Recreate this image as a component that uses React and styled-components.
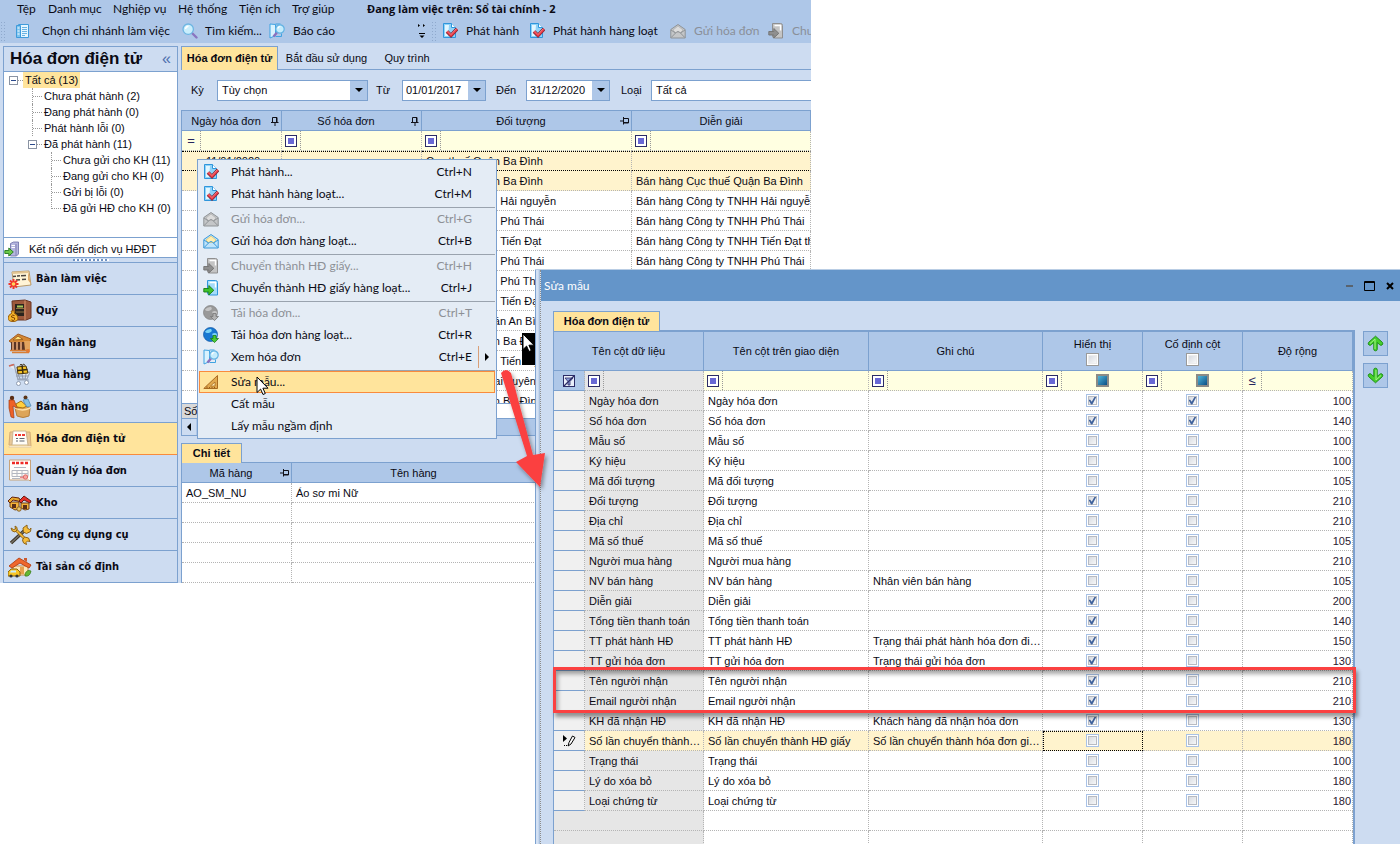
import React from 'react';
import styled, { createGlobalStyle, css } from 'styled-components';

const C = {
  bar: '#aec7e8',
  panel: '#cddcf1',
  line: '#7ca1cf',
  active: '#ffe49c',
  selected: '#fff3cd',
  filter: '#ffffe1',
  dots: '#b4b4b4',
  orange: '#f98b3c',
  red: '#fb4141',
};
const SANS = '"Liberation Sans", Arial, sans-serif';
const UI = 'Lato, "Open Sans", sans-serif';
const TAHOMA = '"DejaVu Sans Condensed", "DejaVu Sans", sans-serif';

const Global = createGlobalStyle`
  * { box-sizing: border-box; }
  body { margin: 0; background: #fff; color: #0a0a14; font: 11px/16px ${SANS}; }
  button, input, select { font: inherit; color: inherit; }
  button { padding: 0; border: 0; background: none; }
  ul { margin: 0; padding: 0; list-style: none; }
  svg { display: block; flex: none; }
`;

const Desktop = styled.div`
  position: relative;
  min-height: 100vh;
  overflow: hidden;
`;

/* ---------- main window ---------- */
const MainWindow = styled.main`
  width: calc(100% - 589px);
  min-width: 600px;
  background: ${C.panel};
  overflow: hidden;
`;
const TopBars = styled.header`
  height: 43px;
  background: ${C.bar};
  font: 12px/18px ${UI};
  white-space: nowrap;
  overflow: hidden;
`;
const MenuBar = styled.nav`
  display: flex;
  height: 19px;
  gap: 12px;
  padding-left: 17px;
`;
const MenuEntry = styled.button`
  height: 18px;
  width: ${(p) => p.$w}px;
  text-align: left;
  white-space: nowrap;
`;
const WorkingOn = styled.strong`
  margin-left: 19px;
  font: bold 11px/18px "Open Sans", sans-serif;
`;
const ToolRow = styled.div`
  display: flex;
  height: 24px;
  align-items: center;
`;
const ToolGroup = styled.div`
  display: flex;
  flex: none;
  align-items: center;
  width: ${(p) => p.$w || 'auto'};
`;
const Grip = styled.span`
  flex: none;
  width: 5px;
  height: 20px;
  margin-right: ${(p) => p.$after}px;
  background: radial-gradient(circle, #8fa9cd 1px, transparent 1px) 0 0 / 3px 3px;
`;
const ToolButton = styled.button`
  display: flex;
  flex: none;
  align-items: center;
  gap: ${(p) => p.$gap || 8}px;
  width: ${(p) => p.$w}px;
  white-space: nowrap;
  color: ${(p) => (p.disabled ? '#8a8f98' : 'inherit')};
`;
const Body = styled.div`
  display: grid;
  grid-template-columns: 175px minmax(0, 1fr);
  gap: 3px;
  padding: 3px 0 0 3px;
`;
const SidePanel = styled.aside`
  border: 1px solid ${C.line};
  border-bottom: 0;
`;
const SideHeader = styled.div`
  display: flex;
  justify-content: space-between;
  align-items: center;
  height: 25px;
  padding: 0 6px;
  border-bottom: 1px solid ${C.line};
`;
const SideTitle = styled.h1`
  margin: 0;
  font: bold 17px/22px ${SANS};
`;
const Collapse = styled.button`
  color: #4d6fae;
  font: 16px/16px ${SANS};
`;
const Tree = styled.div`
  height: 165px;
  padding-left: 5px;
  background: #fff;
`;
const Branch = styled.ul`
  padding-left: ${(p) => p.$indent}px;
`;
const TreeRow = styled.div`
  display: flex;
  align-items: center;
  height: 16px;
`;
const Toggle = styled.button`
  display: grid;
  place-items: center;
  flex: none;
  width: 9px;
  height: 9px;
  margin-left: ${(p) => p.$out || 0}px;
  border: 1px solid #8a93a3;
  background: #fff;
  &::after {
    content: '';
    width: 5px;
    height: 1px;
    background: #2c4a8c;
  }
`;
const Dash = styled.span`
  width: 5px;
  border-top: 1px dotted #999;
`;
const Elbow = styled.span`
  width: 10px;
  height: 16px;
  ${(p) => !p.$last && 'border-left: 1px dotted #999;'}
  &::after {
    content: '';
    display: block;
    height: 8px;
    border-bottom: 1px dotted #999;
    ${(p) => p.$last && 'border-left: 1px dotted #999;'}
  }
`;
const TreeLabel = styled.button`
  height: 16px;
  padding: 0 2px;
  white-space: nowrap;
  background: ${(p) => (p.$on ? C.active : 'transparent')};
`;
const LinkRow = styled.a`
  display: flex;
  align-items: flex-end;
  gap: 9px;
  height: 20px;
  border-top: 1px solid ${C.line};
  background: #fff;
  color: inherit;
  text-decoration: none;
  line-height: 15px;
  overflow: hidden;
`;
const Splitter = styled.div`
  height: 6px;
  border: solid ${C.line};
  border-width: 1px 0;
  &::after {
    content: '';
    display: block;
    width: 36px;
    height: 2px;
    margin: 1px auto 0;
    background: repeating-linear-gradient(90deg, #6f93c4 0 2px, #fff 2px 4px);
  }
`;
const NavButton = styled.button`
  display: flex;
  align-items: center;
  gap: 4px;
  width: 100%;
  height: 32px;
  padding: 1px 4px 0;
  border-bottom: 1px solid ${(p) => (p.$on ? C.orange : C.line)};
  background: ${(p) => (p.$on ? C.active : C.panel)};
  font: bold 11px/16px ${TAHOMA};
`;

const Workspace = styled.section`
  min-width: 0;
`;
const Tabs = styled.div`
  display: flex;
  height: ${(p) => p.$h}px;
  border-bottom: 1px solid ${C.line};
`;
const Tab = styled.button`
  width: ${(p) => p.$w}px;
  flex: none;
  white-space: nowrap;
  ${(p) => p.$on && css`
    margin-bottom: -1px;
    padding-bottom: 2px;
    border: 1px solid ${C.line};
    border-bottom: 0;
    background: ${C.active};
    font-weight: bold;
  `}
`;
const FilterBar = styled.div`
  display: flex;
  align-items: center;
  height: 40px;
  padding-left: 10px;
`;
const FieldLabel = styled.label`
  flex: none;
  width: ${(p) => p.$w}px;
`;
const Field = styled.span`
  display: flex;
  flex: none;
  width: ${(p) => p.$w}px;
  height: 21px;
  margin-right: ${(p) => p.$after || 0}px;
  border: 1px solid ${C.line};
  background: #fff;
`;
const WideField = styled(Field)`
  flex: 1;
  border-right: 0;
`;
const SelectBox = styled.select`
  flex: 1;
  min-width: 0;
  padding: 0 4px;
  border: 0;
  border-radius: 0;
  appearance: none;
  background: #fff;
`;
const DateBox = styled.input`
  flex: 1;
  min-width: 0;
  padding: 0 3px;
  border: 0;
`;
const Drop = styled.button`
  display: grid;
  place-items: center;
  width: 17px;
  background: ${C.bar};
  &::after {
    content: '';
    border: 4px solid transparent;
    border-top-color: #000;
    border-bottom: 0;
  }
`;

/* ---------- tables ---------- */
const Table = styled.table`
  width: 100%;
  table-layout: fixed;
  border-collapse: separate;
  border-spacing: 0;
`;
const Th = styled.th`
  height: ${(p) => p.$h || 21}px;
  padding: 0;
  border: solid ${C.line};
  border-width: ${(p) => (p.$h === 20 ? '0' : '1px')} 1px 1px 0;
  background: ${C.bar};
  font-weight: normal;
  overflow: hidden;
`;
const HeadCell = styled.span`
  display: flex;
  align-items: center;
  padding-right: 1px;
`;
const HeadText = styled.span`
  flex: 1;
`;
const HeadStack = styled.label`
  display: flex;
  flex-direction: column;
  align-items: center;
  gap: 1px;
`;
const Td = styled.td`
  height: 20px;
  padding: 0 1px 0 4px;
  border: dotted ${C.dots};
  border-width: 0 1px 1px 0;
  background: ${(p) => p.$bg || '#fff'};
  text-align: ${(p) => p.$align || 'left'};
  line-height: 18px;
  white-space: nowrap;
  overflow: hidden;
  text-overflow: ${(p) => (p.$clip ? 'clip' : 'ellipsis')};
  ${(p) => p.$number && 'color: #2a2030;'}
  ${(p) => p.$box && 'padding: 0;'}
  ${(p) => p.$band && css`
    border-top: 1px dotted #000;
    border-bottom: 1px dotted #000;
  `}
  ${(p) => p.$focus && css`
    outline: 1px dotted #000;
    outline-offset: -1px;
  `}
`;
const FilterTd = styled(Td)`
  padding: 0;
`;
const FilterCell = styled.div`
  display: flex;
  align-items: center;
  height: 19px;
`;
const Operator = styled.button`
  display: grid;
  place-items: center;
  flex: none;
  width: 19px;
  height: 19px;
  border-right: 1px dotted #999;
  color: #26265e;
  font-size: 13px;
`;
const FilterInput = styled.input`
  flex: 1;
  min-width: 0;
  height: 17px;
  padding: 0 2px;
  border: 0;
  background: transparent;
`;
const CheckHolder = styled.span`
  display: grid;
  flex: 1;
  place-items: center;
`;
const Check = styled.input`
  display: grid;
  place-items: center;
  width: 13px;
  height: 13px;
  margin: ${(p) => (p.$head ? 0 : '0 auto')};
  border: 1px solid ${(p) => (p.$head ? '#9a9a9a' : '#a9c2e6')};
  appearance: none;
  background: linear-gradient(135deg, #cfd3da, #fff);
  box-shadow: inset 0 0 0 1px #fff, inset 0 0 0 2px ${(p) => (p.$head ? '#ececec' : '#b8bbc2')};
  &:checked::before {
    content: '';
    width: 8px;
    height: 8px;
    background: #3f629c;
    clip-path: polygon(0 40%, 22% 40%, 40% 66%, 78% 0, 100% 0, 48% 100%, 32% 100%);
  }
`;
const TriCheck = styled(Check)`
  border: 2px solid #8b8b86;
  background: linear-gradient(135deg, #4fb6d8, #0b4f86);
  box-shadow: none;
`;
const MasterGrid = styled.div`
  height: 293px;
  border-left: 1px solid ${C.line};
  background: #fff;
  overflow: hidden;
`;
const Summary = styled.div`
  height: 15px;
  border-left: 1px solid ${C.line};
  border-top: 1px solid ${C.line};
  background: #fff;
  overflow: hidden;
`;
const SummaryLabel = styled.span`
  display: block;
  width: 98px;
  padding-left: 2px;
  background: #d9d9d9;
  line-height: 14px;
`;
const ScrollTrack = styled.div`
  display: flex;
  height: 18px;
  margin-bottom: 7px;
  border: 1px solid ${C.line};
  background: ${C.bar};
`;
const ScrollLeft = styled.button`
  display: grid;
  place-items: center;
  width: 14px;
  background: ${C.panel};
  &::after {
    content: '';
    border: 4px solid transparent;
    border-right-color: #000;
    border-left: 0;
  }
`;
const DetailGrid = styled.div`
  border-left: 1px solid ${C.line};
`;

/* ---------- context menu ---------- */
const ContextMenu = styled.ul`
  position: absolute;
  top: 159px;
  left: 197px;
  width: 300px;
  padding: 1px;
  border: 1px solid ${C.line};
  background: #e4ecf5;
  font: 12px/18px ${UI};
`;
const MenuItem = styled.button`
  display: flex;
  align-items: center;
  width: 100%;
  height: 22px;
  border: 1px solid ${(p) => (p.$on ? C.orange : 'transparent')};
  background: ${(p) => (p.$on ? C.active : 'transparent')};
  color: ${(p) => (p.disabled ? '#8d9096' : 'inherit')};
  white-space: nowrap;
`;
const IconSlot = styled.span`
  flex: none;
  width: 31px;
  padding-left: 3px;
`;
const MenuText = styled.span`
  flex: 1;
  text-align: left;
`;
const Shortcut = styled.span`
  width: 48px;
  text-align: right;
`;
const SubArrow = styled.span`
  display: flex;
  align-items: center;
  width: 22px;
  height: 22px;
  padding-left: 6px;
  ${(p) => p.$on && css`
    &::before {
      content: '';
      height: 22px;
      border-left: 1px solid #d99f78;
    }
    &::after {
      content: '';
      margin-left: 6px;
      border: 4px solid transparent;
      border-left-color: #000;
      border-right: 0;
    }
  `}
`;
const Divider = styled.li`
  height: 3px;
  margin-left: 31px;
  &::after {
    content: '';
    display: block;
    height: 2px;
    border-bottom: 1px solid #9aa3ae;
  }
`;

/* ---------- dialog ---------- */
const Dialog = styled.section`
  position: absolute;
  top: 269px;
  right: 0;
  bottom: 0;
  left: 535px;
  display: flex;
  background: ${C.panel};
  border-top: 1px solid #b9cde4;
  overflow: hidden;
`;
const DialogEdge = styled.div`
  flex: none;
  width: 6px;
  border-left: 1px solid ${C.line};
  border-right: 1px dotted #8c8c8c;
  background: linear-gradient(90deg, #d3e1f4 50%, #9db6d6);
`;
const DialogMain = styled.div`
  flex: 1;
  min-width: 0;
`;
const TitleBar = styled.header`
  display: flex;
  align-items: center;
  gap: 4px;
  height: 31px;
  padding: 0 2px 0 3px;
  background: #6495c9;
  color: #fff;
  font: 12px/18px ${UI};
`;
const DialogTitle = styled.h2`
  flex: 1;
  margin: 0;
  font: inherit;
`;
const DialogBody = styled.div`
  display: flex;
  align-items: flex-start;
  gap: 8px;
  padding: 10px 12px 0;
`;
const DialogContent = styled.div`
  flex: 1;
  min-width: 0;
`;
const ColumnGrid = styled.div`
  position: relative;
  border: solid ${C.line};
  border-width: 0 2px 0 1px;
`;
const Selector = styled(Td)`
  padding: 0;
  border-bottom: 1px solid ${C.line};
  background: ${(p) => p.$bg || '#f0f0f0'};
  svg { margin: 0 auto; }
`;
const OrderButtons = styled.div`
  display: flex;
  flex-direction: column;
  gap: 7px;
  padding-top: 20px;
`;
const OrderButton = styled.button`
  display: grid;
  place-items: center;
  width: 25px;
  height: 25px;
  border: 1px solid ${C.line};
  background: ${C.bar};
`;

/* ---------- annotations ---------- */
const Highlight = styled.div`
  position: absolute;
  top: 336px;
  left: -1px;
  right: -3px;
  height: 46px;
  border: 3px solid ${C.red};
  box-shadow: 2px 4px 4px rgba(0, 0, 0, 0.4), inset 2px 4px 4px rgba(0, 0, 0, 0.35);
  pointer-events: none;
`;
const Pointer = styled.svg`
  position: absolute;
  top: ${(p) => p.$y}px;
  left: ${(p) => p.$x}px;
  pointer-events: none;
`;
const CursorTile = styled.div`
  position: absolute;
  top: 333px;
  left: 522px;
  width: 13px;
  height: 32px;
  background: #000;
`;

/* ---------- small icons ---------- */
const Ico = ({ s = 16, children, ...rest }) => (
  <svg width={s} height={s} viewBox="0 0 16 16" aria-hidden="true" {...rest}>{children}</svg>
);
const IcoCheckPage = () => (
  <Ico>
    <path d="M1.500 .5h8l4 4v10h-12z" fill="#8fd2f8" stroke="#2f96dc" />
    <path d="M3 2h4l-1 11H3z" fill="#e2f6ff" />
    <path d="M9.500 .5v4h4" fill="#fff" stroke="#2f96dc" />
    <path d="M5 8.500l4 4 6-6.500" fill="none" stroke="#7c2434" strokeWidth="3.600" />
    <path d="M5 8.500l4 4 6-6.500" fill="none" stroke="#ea3b46" strokeWidth="2" />
    <path d="M5.500 8l3.500 3.500 5-5.500" fill="none" stroke="#ff9ea0" strokeWidth=".7" />
  </Ico>
);
const IcoMail = ({ grey }) => (
  <Ico>
    <path d="M.8 6.500L8 1.500l7.200 5v8.500H.8z" fill={grey ? '#c4c6c8' : '#bfe4fb'} stroke={grey ? '#8f9396' : '#3b98d8'} />
    <path d="M3 7L8 3l5 4-2.500 2.500h-5z" fill={grey ? '#dcdcdc' : '#ffeeb0'} stroke={grey ? '#aaa' : '#d8bb5c'} strokeWidth=".6" />
    <path d="M1.200 14.500L6.500 9q1.500-1 3 0l5.300 5.500M1 7l4.500 3M15 7l-4.500 3" fill="none" stroke={grey ? '#8f9396' : '#3b98d8'} />
  </Ico>
);
const IcoExport = ({ grey }) => (
  <Ico>
    <path d="M4.500 .5h8q2 0 2 2v12.500h-8q-2 0-2-2z" fill={grey ? '#c4c4c4' : '#a5dcfa'} stroke={grey ? '#8f8f8f' : '#2f96dc'} />
    <path d="M6.500 2.500h6v5" fill="none" stroke="#fff" strokeWidth="1.400" />
    <path d="M.8 8.500h5v-3l5 4.800-5 4.700v-3h-5z" fill={grey ? '#8f8f8f' : '#3fc42c'} stroke={grey ? '#707070' : '#177a14'} strokeWidth=".9" />
  </Ico>
);
const IcoGlobe = ({ grey }) => (
  <Ico>
    <circle cx="7.500" cy="7.500" r="7" fill={grey ? '#999' : '#1878d2'} stroke={grey ? '#808080' : '#0f54a4'} strokeWidth=".7" />
    <path d="M2 4.500Q4.500 1.500 8 2q2 2-1 3.500Q3 7 2 4.500zM9 7q3-2 5 0 0 3-3 4z" fill={grey ? '#c4c4c4' : '#7ad2f5'} />
    <path d="M10 8.500h3v3h2.500L11.500 15.600 7.500 11.500H10z" fill={grey ? '#b3b3b3' : '#4bcb35'} stroke={grey ? '#777' : '#197f14'} strokeWidth=".8" />
  </Ico>
);
const IcoPreview = () => (
  <Ico>
    <path d="M1 1l5.500.5v11L1 15z" fill="#d9f2fe" stroke="#3fa3e2" />
    <path d="M6.500 1h5M6.500 13.500h6v-3" fill="none" stroke="#3fa3e2" />
    <path d="M8 9.500l-3.500 4" stroke="#8d70bd" strokeWidth="2.400" />
    <circle cx="11" cy="6" r="4.200" fill="#c5ecfc" stroke="#61b1e2" strokeWidth="1.200" />
    <path d="M8.800 5.500q.6-2 2.500-2" fill="none" stroke="#fff" strokeWidth="1.200" />
  </Ico>
);
const IcoSquare = () => (
  <Ico>
    <path d="M.8 14.500L14.500 1.500v13z" fill="#e2a94e" stroke="#a86a20" />
    <path d="M7.500 12L12 8v4z" fill="#fff0b9" stroke="#a86a20" strokeWidth=".8" />
    <path d="M4 14v-1.500M6.500 14v-1M9 14v-1M11.500 14v-1" stroke="#7d4a10" strokeWidth=".8" />
  </Ico>
);
const IcoBranch = () => (
  <Ico>
    <path d="M3.500 1.500h10v13h-10z" fill="#e4f6ff" stroke="#3f9bdb" />
    <path d="M1.500 2.500h4v12h-4z" fill="#7cc3ee" stroke="#3f9bdb" />
    <path d="M2.500 5h2M2.500 8h2M2.500 11h2" stroke="#fff" />
    <path d="M7 4.500h5M7 6.500h5M7 8.500h5M7 10.500h5M7 12.500h3" stroke="#69b2e2" />
  </Ico>
);
const IcoSearch = () => (
  <Ico>
    <path d="M9.500 9.500l5 5" stroke="#8a75c0" strokeWidth="2.400" strokeLinecap="round" />
    <circle cx="6.200" cy="6.200" r="5.200" fill="#c9eefc" stroke="#6db5e2" strokeWidth="1.300" />
    <path d="M3.500 6q.4-2.500 3-2.800" fill="none" stroke="#fff" strokeWidth="1.400" />
  </Ico>
);
const IcoServer = () => (
  <Ico>
    <path d="M6.500 2.500l3-1.500h5v12l-2 2h-6z" fill="#b5b6de" stroke="#6a6ca5" strokeWidth=".8" />
    <path d="M12 3v11.500" stroke="#6a6ca5" strokeWidth=".7" />
    <path d="M7.500 4.500h3.500M7.500 6.500h3.500" stroke="#fff" />
    <path d="M.8 9.500h4V7l4.500 4-4.500 4v-2.500h-4z" fill="#6bc949" stroke="#23781c" strokeWidth=".9" />
  </Ico>
);
const Pin = ({ side }) => (
  <svg width="10" height="10" viewBox="0 0 10 10" aria-hidden="true">
    <g transform={side ? 'rotate(90 5 5)' : undefined} stroke="#101018" fill="none">
      <path d="M2.500 6.500v-5h4v5M1 6.500h7.500M5 6.500v3.500M6.500 1v5.500M7 1.500v5" />
    </g>
  </svg>
);
const EqualsBox = () => (
  <svg width="12" height="12" viewBox="0 0 12 12" aria-hidden="true">
    <rect x=".5" y=".5" width="11" height="11" fill="#fff" stroke="#2b2b66" />
    <rect x="3" y="3" width="6" height="6" fill="#6868d4" />
  </svg>
);
const ClearFilter = () => (
  <svg width="12" height="12" viewBox="0 0 12 12" aria-hidden="true">
    <rect x=".5" y=".5" width="11" height="11" fill="#e9eefa" stroke="#2b2b66" />
    <path d="M2 3h8L7 6.500V10H5V6.500z" fill="#8fa0dc" stroke="#2b2b66" strokeWidth=".8" />
    <path d="M1 11L11 1" stroke="#2b2b66" strokeWidth="1.300" />
  </svg>
);
const EditMark = () => (
  <svg width="14" height="12" viewBox="0 0 14 12" aria-hidden="true">
    <path d="M1 0l4 3.500L1 7z" fill="#000" />
    <path d="M6 11l1-3.500L10.500 1l2.500 1.500L9 9z" fill="#fff" stroke="#000" />
    <path d="M2 10.500h1M4 10.500h1" stroke="#000" />
  </svg>
);
const GreenArrow = ({ down }) => (
  <svg width="17" height="17" viewBox="0 0 17 17" aria-hidden="true">
    <g transform={down ? 'rotate(180 8.500 8.500)' : undefined}>
      <path d="M8.500 1.200L1.500 7.500q-.8 1.500.5 2.500 1.300.8 2.300-.3L6.800 7.500v7q.2 1.300 1.700 1.300t1.700-1.300v-7l2.500 2.200q1 1.100 2.300.3 1.300-1 .5-2.500z" fill="#46cf2b" stroke="#1d8f17" strokeLinejoin="round" />
      <path d="M3 8.500l5-4.500v10" fill="none" stroke="#a5f08c" />
    </g>
  </svg>
);
const Arrowhead = () => (
  <path d="M1 1v15.500l3.600-3.400 2.400 5.400 2.300-1-2.400-5.300H12z" fill="#fff" stroke="#000" strokeLinejoin="round" />
);

/* ---------- module icons ---------- */
const Mod = ({ children }) => <svg width="24" height="24" viewBox="0 0 24 24" aria-hidden="true">{children}</svg>;
const ModDesk = () => (
  <Mod>
    <path d="M4 5l17-1 2 14-17 2z" fill="#fff4d6" stroke="#b89a6a" />
    <path d="M20 4l3 13-3-4z" fill="#e0ab6a" />
    <path d="M4 5l16-1 .4 2L4.500 7z" fill="#e2c491" />
    <path d="M5 9.500l3-.3M9 9l3-.2M13 8.800l5-.3M8 13l4-.3M14 12.500l4-.3" stroke="#4b4540" strokeWidth="1.600" />
    <path d="M5.500 12v10M.5 17h10M2 13.500l7 7M9 13.500l-7 7" stroke="#f0352b" strokeWidth="2" />
    <circle cx="5.500" cy="17" r="1.800" fill="#ffd45c" />
  </Mod>
);
const ModCash = () => (
  <Mod>
    <path d="M4 2l13-1 6 2v16l-5 2H5z" fill="#9d593c" stroke="#6a3421" />
    <path d="M17 1.500V21" stroke="#c88661" strokeWidth="1.400" />
    <rect x="7" y="5" width="9" height="12" fill="#2b241e" />
    <path d="M8 9.500h8M8 13h8" stroke="#8f7040" />
    <path d="M9 6.500h6v2H9z" fill="#a7c75a" />
    <path d="M3 12h4l-1 2q4 2 4 5 0 3.500-5 3.500T0 19q0-3 4-5z" fill="#f6b62b" stroke="#995e0b" />
    <path d="M6.500 16.500q-2.500-1-3 .5t1.700 1.500 1.300 2-3 .3" fill="none" stroke="#7a3b00" />
  </Mod>
);
const ModBank = () => (
  <Mod>
    <path d="M1 10L10 3l13 5-2 4H4z" fill="#d68836" stroke="#a35f22" />
    <path d="M5 9l5-4 5 3.500z" fill="#ffe37a" stroke="#a4641f" />
    <path d="M3 11h15v8H3z" fill="#5c3524" />
    <path d="M5 11v8M9 11v8M13 11v8" stroke="#e8a878" strokeWidth="1.600" />
    <path d="M16 10h6v9h-5z" fill="#e3a35e" />
    <path d="M2 19.500h18M4 21.500h17" stroke="#d87e34" strokeWidth="1.600" />
    <circle cx="20" cy="20" r="2" fill="#e27a35" />
  </Mod>
);
const ModBuy = () => (
  <Mod>
    <path d="M1 3l5-1.500L10 17h11M7 9h15l-3 7H9" fill="#e7ebf2" stroke="#9aa5b8" strokeWidth="1.200" />
    <path d="M1 3l5-1.500" stroke="#d06a5a" strokeWidth="1.800" />
    <path d="M9 4l9-1 2 7-10 1z" fill="#f5c425" stroke="#4c3509" />
    <path d="M14 2.500l1 8M9.500 7.500l10-1" stroke="#3a2b10" strokeWidth="1.500" />
    <path d="M12 2.500q1-3 2 0 2-3 3 0" fill="none" stroke="#3a2b10" />
    <path d="M10 11l2 5M14 11l1 5M18 11l-1 5M8 13h12" stroke="#8d97aa" />
    <circle cx="10.500" cy="20.500" r="2" fill="#fff" stroke="#8f9bb0" />
    <circle cx="18.500" cy="19.500" r="2" fill="#fff" stroke="#8f9bb0" />
  </Mod>
);
const ModSell = () => (
  <Mod>
    <path d="M7 13q7-4 15 0l-1 8q-6 3-12 0z" fill="#dda559" stroke="#b57f3c" />
    <path d="M7 13q7 4 15 0" fill="none" stroke="#ffe0a4" strokeWidth="1.400" />
    <circle cx="4" cy="3" r="2.200" fill="#5b2e16" />
    <path d="M1 5l5 0 2 5 3 2-2 1-4-2 1 12-3-1-2-9z" fill="#ef6127" stroke="#a23d14" strokeWidth=".7" />
    <path d="M8 9l5-3 6 5-4 2-6-1z" fill="#ffcf3e" stroke="#a46f11" />
    <circle cx="17.500" cy="2.500" r="2" fill="#5b3417" />
    <path d="M15 5l5-1 3 7-4 1-2-3z" fill="#86bfe2" stroke="#4b83ac" strokeWidth=".7" />
  </Mod>
);
const ModInvoice = () => (
  <Mod>
    <path d="M2 5h5l-3 13H1zM18 5h4l1 14h-3z" fill="#e8c898" stroke="#d5ad75" />
    <path d="M5 4h13l2 14H4z" fill="#fffdf7" stroke="#ccb590" />
    <path d="M7 8h2M10 8h3M14 8h3" stroke="#ee3d36" strokeWidth="2" />
    <path d="M8 11.500h2M11.500 11.500h5M8 14h2M11.500 14h5" stroke="#5f6470" strokeWidth="1.200" />
    <path d="M1 19h22v1.500H1z" fill="#fff1d5" stroke="#e0c79c" strokeWidth=".6" />
  </Mod>
);
const ModInvoices = () => (
  <Mod>
    <path d="M1.500 1h21v21l-2-1h-19z" fill="#fffdf9" stroke="#c8a37a" />
    <path d="M4 4h3M8 4h3M12.500 4h3M17 4h3" stroke="#ee2a24" strokeWidth="2.600" />
    <path d="M6 8.500h12M4 11.500h16v6H4zM9 11.500v6M14 11.500v6M4 14.500h16M4 19.500h8" fill="none" stroke="#b4b8c1" />
    <path d="M12 18.500h6" stroke="#e88c88" strokeWidth="2" />
    <circle cx="17.500" cy="18" r="2.200" fill="#f5a4a0" stroke="#e06a66" />
  </Mod>
);
const ModStock = () => (
  <Mod>
    <path d="M2 11h9v7l-4 1-5-3z" fill="#f4b43a" stroke="#714116" />
    <path d="M0 10l4-4 7 1 3 5-4-2-5-1-3 3z" fill="#e8a92c" stroke="#642311" />
    <path d="M13 12h8v6l-4 1-4-2z" fill="#f4b43a" stroke="#714116" />
    <path d="M11 10l5-5 7 5-1 2-6-3-3 3z" fill="#e8302a" stroke="#681d13" />
    <path d="M4 13h4v4H4zM15 14h4v4h-4z" fill="#5b2f16" />
    <circle cx="11" cy="18" r="2.200" fill="#e7c66d" stroke="#8a6125" />
  </Mod>
);
const ModTools = () => (
  <Mod>
    <path d="M3 20L16 8" stroke="#3c3424" strokeWidth="3.400" />
    <path d="M3 20L16 8" stroke="#77736a" strokeWidth="1.400" />
    <path d="M15.500 9l-.5-4 4-3 .2 3L21.500 6.500l1.500-1.500-.5 3.500-4 2z" fill="#f6bd3a" stroke="#8d641a" />
    <path d="M8 7l8 8" stroke="#8d641a" strokeWidth="3" />
    <path d="M8 7l8 8" stroke="#f6bd3a" strokeWidth="1.600" />
    <path d="M3 5l2.500 1.500L7.500 6 7 3q3 1 2 4L7 9Q3.500 9 3 5z" fill="#f6bd3a" stroke="#8d641a" />
    <path d="M14.500 17l2-3 4 1 1.500 3.500-2.500-.5-1.500 1.500.5 2q-4-1-4-4.500z" fill="#f6bd3a" stroke="#8d641a" />
  </Mod>
);
const ModAssets = () => (
  <Mod>
    <path d="M5 11h15v9H5z" fill="#ffe6b6" stroke="#c58f52" />
    <path d="M1 11L11 3l12 7-2 3-9-5-8 5z" fill="#f0672c" stroke="#b9481c" />
    <path d="M16 3h3v4l-3-2z" fill="#cc5a2e" />
    <path d="M12 12h4v7h-4z" fill="#e7a14c" />
    <path d="M0 17l3-3h6l3 3v4H0z" fill="#f8c526" stroke="#8b650c" />
    <path d="M3 15.500h5v2H2z" fill="#c9ecfa" />
    <circle cx="3" cy="21" r="1.600" fill="#333" />
    <circle cx="9" cy="21" r="1.600" fill="#333" />
    <path d="M17 19q2-5 6-3-1 6-6 5z" fill="#63b833" stroke="#377a17" strokeWidth=".7" />
  </Mod>
);

/* ---------- data ---------- */
const modules = [
  ['Bàn làm việc', ModDesk], ['Quỹ', ModCash], ['Ngân hàng', ModBank], ['Mua hàng', ModBuy],
  ['Bán hàng', ModSell], ['Hóa đơn điện tử', ModInvoice], ['Quản lý hóa đơn', ModInvoices],
  ['Kho', ModStock], ['Công cụ dụng cụ', ModTools], ['Tài sản cố định', ModAssets],
];
const menus = [['Tệp', 19], ['Danh mục', 53], ['Nghiệp vụ', 53], ['Hệ thống', 49], ['Tiện ích', 41], ['Trợ giúp', 44]];
const invoices = [
  ['11/01/2020', 'Cục thuế Quận Ba Đình', ''],
  ['', 'Cục thuế Quận Ba Đình', 'Bán hàng Cục thuế Quận Ba Đình'],
  ['', 'Công ty TNHH Hải nguyễn', 'Bán hàng Công ty TNHH Hải nguyễn'],
  ['', 'Công ty TNHH Phú Thái', 'Bán hàng Công ty TNHH Phú Thái'],
  ['', 'Công ty TNHH Tiến Đạt', 'Bán hàng Công ty TNHH Tiến Đạt theo hóa đơn'],
  ['', 'Công ty TNHH Phú Thái', 'Bán hàng Công ty TNHH Phú Thái'],
  ['', 'Công ty TNHH Phú Thái', ''],
  ['', 'Công ty TNHH Tiến Đạt', ''],
  ['', 'Công ty cổ phần An Bình', ''],
  ['', 'Cục thuế Quận Ba Đình', ''],
  ['', 'Công ty TNHH Tiến Đạt', ''],
  ['', 'Nguyễn Thị Mai Luyên', ''],
  ['', 'Cục thuế Quận Ba Đình', ''],
];
const columns = [
  ['Ngày hóa đơn', '', 1, 1, 100], ['Số hóa đơn', '', 1, 1, 140], ['Mẫu số', '', 0, 0, 100],
  ['Ký hiệu', '', 0, 0, 100], ['Mã đối tượng', '', 0, 0, 105], ['Đối tượng', '', 1, 0, 210],
  ['Địa chỉ', '', 0, 0, 210], ['Mã số thuế', '', 0, 0, 105], ['Người mua hàng', '', 0, 0, 210],
  ['NV bán hàng', 'Nhân viên bán hàng', 0, 0, 105], ['Diễn giải', '', 1, 0, 200],
  ['Tổng tiền thanh toán', '', 1, 0, 140],
  ['TT phát hành HĐ', 'Trạng thái phát hành hóa đơn điện tử', 1, 0, 150],
  ['TT gửi hóa đơn', 'Trạng thái gửi hóa đơn', 1, 0, 130], ['Tên người nhận', '', 1, 0, 210],
  ['Email người nhận', '', 1, 0, 210], ['KH đã nhận HĐ', 'Khách hàng đã nhận hóa đơn', 1, 0, 130],
  ['Số lần chuyển thành HĐ giấy', 'Số lần chuyển thành hóa đơn giấy của hóa đơn', 0, 0, 180],
  ['Trạng thái', '', 0, 0, 100], ['Lý do xóa bỏ', '', 0, 0, 180], ['Loại chứng từ', '', 0, 0, 180],
];
const EDITING = 17;
const contextItems = [
  { text: 'Phát hành...', key: 'Ctrl+N', icon: <IcoCheckPage /> },
  { text: 'Phát hành hàng loạt...', key: 'Ctrl+M', icon: <IcoCheckPage /> },
  null,
  { text: 'Gửi hóa đơn...', key: 'Ctrl+G', icon: <IcoMail grey />, off: true },
  { text: 'Gửi hóa đơn hàng loạt...', key: 'Ctrl+B', icon: <IcoMail /> },
  null,
  { text: 'Chuyển thành HĐ giấy...', key: 'Ctrl+H', icon: <IcoExport grey />, off: true },
  { text: 'Chuyển thành HĐ giấy hàng loạt...', key: 'Ctrl+J', icon: <IcoExport /> },
  null,
  { text: 'Tải hóa đơn...', key: 'Ctrl+T', icon: <IcoGlobe grey />, off: true },
  { text: 'Tải hóa đơn hàng loạt...', key: 'Ctrl+R', icon: <IcoGlobe /> },
  { text: 'Xem hóa đơn', key: 'Ctrl+E', icon: <IcoPreview />, sub: true },
  null,
  { text: 'Sửa mẫu...', icon: <IcoSquare />, on: true },
  { text: 'Cất mẫu' },
  { text: 'Lấy mẫu ngầm định' },
];

const Filter = ({ name, op, children }) => (
  <FilterCell>
    <Operator aria-label={`Toán tử ${name}`}>{op || <EqualsBox />}</Operator>
    {children || <FilterInput aria-label={`Lọc ${name}`} />}
  </FilterCell>
);

const Leaf = ({ text, last }) => (
  <li><TreeRow><Elbow $last={last} /><TreeLabel>{text}</TreeLabel></TreeRow></li>
);

const Sidebar = () => (
  <SidePanel>
    <SideHeader>
      <SideTitle>Hóa đơn điện tử</SideTitle>
      <Collapse aria-label="Thu gọn">«</Collapse>
    </SideHeader>
    <Tree>
      <TreeRow><Toggle aria-label="Tất cả" /><Dash /><TreeLabel $on>Tất cả (13)</TreeLabel></TreeRow>
      <Branch $indent={23}>
        <Leaf text="Chưa phát hành (2)" />
        <Leaf text="Đang phát hành (0)" />
        <Leaf text="Phát hành lỗi (0)" />
        <li>
          <TreeRow><Toggle $out={-4} aria-label="Đã phát hành" /><Dash /><TreeLabel>Đã phát hành (11)</TreeLabel></TreeRow>
          <Branch $indent={19}>
            <Leaf text="Chưa gửi cho KH (11)" />
            <Leaf text="Đang gửi cho KH (0)" />
            <Leaf text="Gửi bị lỗi (0)" />
            <Leaf text="Đã gửi HĐ cho KH (0)" last />
          </Branch>
        </li>
      </Branch>
    </Tree>
    <LinkRow href="#ket-noi"><IcoServer />Kết nối đến dịch vụ HĐĐT</LinkRow>
    <Splitter />
    {modules.map(([name, Icon]) => (
      <NavButton key={name} $on={name === 'Hóa đơn điện tử'}><Icon />{name}</NavButton>
    ))}
  </SidePanel>
);

const InvoiceTable = () => (
  <Table>
    <colgroup><col width="100" /><col width="140" /><col width="210" /><col /></colgroup>
    <thead>
      <tr>
        <Th><HeadCell><HeadText>Ngày hóa đơn</HeadText><Pin /></HeadCell></Th>
        <Th><HeadCell><HeadText>Số hóa đơn</HeadText><Pin /></HeadCell></Th>
        <Th><HeadCell><HeadText>Đối tượng</HeadText><Pin side /></HeadCell></Th>
        <Th>Diễn giải</Th>
      </tr>
    </thead>
    <tbody>
      <tr>
        <FilterTd $bg={C.filter}><Filter name="Ngày hóa đơn" op="=" /></FilterTd>
        <FilterTd $bg={C.filter}><Filter name="Số hóa đơn" /></FilterTd>
        <FilterTd $bg={C.filter}><Filter name="Đối tượng" /></FilterTd>
        <FilterTd $bg={C.filter}><Filter name="Diễn giải" /></FilterTd>
      </tr>
      {invoices.map(([date, target, note], i) => {
        const look = { $bg: i < 2 ? C.selected : '#fff', $band: i === 0, $clip: true };
        return (
          <tr key={i}>
            <Td {...look} $align="center">{date}</Td>
            <Td {...look} />
            <Td {...look}>{target}</Td>
            <Td {...look}>{note}</Td>
          </tr>
        );
      })}
    </tbody>
  </Table>
);

const DetailTable = () => (
  <DetailGrid>
    <Table>
      <colgroup><col width="110" /><col width="244" /><col /></colgroup>
      <thead>
        <tr>
          <Th $h={20}><HeadCell><HeadText>Mã hàng</HeadText><Pin side /></HeadCell></Th>
          <Th $h={20}>Tên hàng</Th>
          <Th $h={20} />
        </tr>
      </thead>
      <tbody>
        {['AO_SM_NU', '', '', '', ''].map((code, i) => (
          <tr key={i}><Td>{code}</Td><Td>{code && 'Áo sơ mi Nữ'}</Td><Td /></tr>
        ))}
      </tbody>
    </Table>
  </DetailGrid>
);

const ColumnTable = () => (
  <Table>
    <colgroup>
      <col width="31" /><col width="119" /><col width="165" /><col width="174" /><col width="100" /><col width="100" /><col />
    </colgroup>
    <thead>
      <tr>
        <Th $h={40} colSpan={2}>Tên cột dữ liệu</Th>
        <Th $h={40}>Tên cột trên giao diện</Th>
        <Th $h={40}>Ghi chú</Th>
        <Th $h={40}><HeadStack>Hiển thị<Check $head type="checkbox" /></HeadStack></Th>
        <Th $h={40}><HeadStack>Cố định cột<Check $head type="checkbox" /></HeadStack></Th>
        <Th $h={40}>Độ rộng</Th>
      </tr>
    </thead>
    <tbody>
      <tr>
        <Selector $bg={C.bar}><ClearFilter /></Selector>
        <FilterTd $bg="#e6e6e6"><Filter name="Tên cột dữ liệu" /></FilterTd>
        <FilterTd $bg={C.filter}><Filter name="Tên cột trên giao diện" /></FilterTd>
        <FilterTd $bg={C.filter}><Filter name="Ghi chú" /></FilterTd>
        <FilterTd $bg={C.filter}>
          <Filter name="Hiển thị"><CheckHolder><TriCheck type="checkbox" aria-label="Lọc Hiển thị" /></CheckHolder></Filter>
        </FilterTd>
        <FilterTd $bg={C.filter}>
          <Filter name="Cố định cột"><CheckHolder><TriCheck type="checkbox" aria-label="Lọc Cố định cột" /></CheckHolder></Filter>
        </FilterTd>
        <FilterTd $bg={C.filter}><Filter name="Độ rộng" op="≤" /></FilterTd>
      </tr>
      {columns.map(([name, note, shown, fixed, width], i) => {
        const bg = i === EDITING ? C.selected : '#fff';
        return (
          <tr key={name}>
            <Selector>{i === EDITING && <EditMark />}</Selector>
            <Td $bg={i === EDITING ? C.selected : '#e6e6e6'}>{name}</Td>
            <Td $bg={bg}>{name}</Td>
            <Td $bg={bg}>{note}</Td>
            <Td $box $bg={bg} $focus={i === EDITING}><Check type="checkbox" defaultChecked={!!shown} aria-label={`Hiển thị ${name}`} /></Td>
            <Td $box $bg={bg}><Check type="checkbox" defaultChecked={!!fixed} aria-label={`Cố định ${name}`} /></Td>
            <Td $bg={bg} $align="right" $number>{width}</Td>
          </tr>
        );
      })}
      {[0, 1].map((i) => (
        <tr key={i}>
          <Td $bg="#e6e6e6" colSpan={2} /><Td /><Td /><Td /><Td /><Td />
        </tr>
      ))}
    </tbody>
  </Table>
);

const EditDialog = () => (
  <Dialog role="dialog" aria-labelledby="dialog-title">
    <DialogEdge />
    <DialogMain>
      <TitleBar>
        <DialogTitle id="dialog-title">Sửa mẫu</DialogTitle>
        <button aria-label="Thu nhỏ"><Ico><path d="M4 8h7" stroke="#59636e" strokeWidth="2" /></Ico></button>
        <button aria-label="Phóng to"><Ico><path d="M2.500 3.500h10v9h-10zM2 4.500h11" fill="none" stroke="#000" /></Ico></button>
        <button aria-label="Đóng"><Ico><path d="M5 5l6 6M11 5l-6 6" stroke="#000" strokeWidth="2" /></Ico></button>
      </TitleBar>
      <DialogBody>
        <DialogContent>
          <Tabs $h={20} role="tablist"><Tab role="tab" aria-selected $on $w={107}>Hóa đơn điện tử</Tab></Tabs>
          <ColumnGrid>
            <ColumnTable />
            <Highlight />
          </ColumnGrid>
        </DialogContent>
        <OrderButtons>
          <OrderButton aria-label="Lên"><GreenArrow /></OrderButton>
          <OrderButton aria-label="Xuống"><GreenArrow down /></OrderButton>
        </OrderButtons>
      </DialogBody>
    </DialogMain>
  </Dialog>
);

export default function App() {
  return (
    <Desktop>
      <Global />
      <MainWindow>
        <TopBars>
          <MenuBar>
            {menus.map(([m, w]) => <MenuEntry key={m} $w={w}>{m}</MenuEntry>)}
            <WorkingOn>Đang làm việc trên: Sổ tài chính - 2</WorkingOn>
          </MenuBar>
          <ToolRow>
            <ToolGroup $w="431px">
              <Grip $after={10} />
              <ToolButton $gap={11} $w={167}><IcoBranch />Chọn chi nhánh làm việc</ToolButton>
              <ToolButton $gap={7} $w={87}><IcoSearch />Tìm kiếm...</ToolButton>
              <ToolButton $w={149}><IcoPreview />Báo cáo</ToolButton>
              <svg width="8" height="16" viewBox="0 0 8 16" aria-label="Thêm">
                <path d="M0 1l2 1.500L0 4zM5 1l2 1.500L5 4zM1 10h6v1H1zM1.500 12.500h5L4 15z" fill="#000" />
              </svg>
            </ToolGroup>
            <Grip $after={6} />
            <ToolButton $w={87}><IcoCheckPage />Phát hành</ToolButton>
            <ToolButton $w={141}><IcoCheckPage />Phát hành hàng loạt</ToolButton>
            <ToolButton $w={98} disabled><IcoMail grey />Gửi hóa đơn</ToolButton>
            <ToolButton $w={140} disabled><IcoExport grey />Chuyển thành HĐ giấy</ToolButton>
          </ToolRow>
        </TopBars>
        <Body>
          <Sidebar />
          <Workspace>
            <Tabs $h={24} role="tablist">
              <Tab role="tab" aria-selected $on $w={97}>Hóa đơn điện tử</Tab>
              <Tab role="tab" $w={97}>Bắt đầu sử dụng</Tab>
              <Tab role="tab" $w={64}>Quy trình</Tab>
            </Tabs>
            <FilterBar>
              <FieldLabel $w={26} htmlFor="ky">Kỳ</FieldLabel>
              <Field $w={151} $after={8}>
                <SelectBox id="ky"><option>Tùy chọn</option></SelectBox><Drop aria-label="Chọn kỳ" />
              </Field>
              <FieldLabel $w={26} htmlFor="tu">Từ</FieldLabel>
              <Field $w={84} $after={10}><DateBox id="tu" defaultValue="01/01/2017" /><Drop aria-label="Chọn từ ngày" /></Field>
              <FieldLabel $w={30} htmlFor="den">Đến</FieldLabel>
              <Field $w={84} $after={11}><DateBox id="den" defaultValue="31/12/2020" /><Drop aria-label="Chọn đến ngày" /></Field>
              <FieldLabel $w={30} htmlFor="loai">Loại</FieldLabel>
              <WideField><SelectBox id="loai"><option>Tất cả</option></SelectBox></WideField>
            </FilterBar>
            <MasterGrid><InvoiceTable /></MasterGrid>
            <Summary><SummaryLabel>Số dòng = 13</SummaryLabel></Summary>
            <ScrollTrack><ScrollLeft aria-label="Cuộn trái" /></ScrollTrack>
            <Tabs $h={20} role="tablist"><Tab role="tab" aria-selected $on $w={61}>Chi tiết</Tab></Tabs>
            <DetailTable />
          </Workspace>
        </Body>
      </MainWindow>

      <ContextMenu role="menu">
        {contextItems.map((item, i) => item ? (
          <li key={i}>
            <MenuItem role="menuitem" disabled={item.off} $on={item.on}>
              <IconSlot>{item.icon}</IconSlot>
              <MenuText>{item.text}</MenuText>
              <Shortcut>{item.key}</Shortcut>
              <SubArrow $on={item.sub} />
            </MenuItem>
          </li>
        ) : <Divider key={i} role="separator" />)}
      </ContextMenu>
      <Pointer $x={256} $y={376} width="14" height="20" viewBox="0 0 14 20"><Arrowhead /></Pointer>

      <EditDialog />

      <CursorTile><svg width="13" height="20" viewBox="0 0 13 20"><Arrowhead /></svg></CursorTile>
      <Pointer $x={490} $y={360} width="64" height="136" viewBox="0 0 64 136">
        <defs>
          <filter id="drop" x="-20%" y="-10%" width="150%" height="130%">
            <feDropShadow dx="2" dy="3" stdDeviation="2" floodOpacity=".4" />
          </filter>
        </defs>
        <path d="M11 13q5-6 10 0L43 95l12-2-5 34L26 102l11-6z" fill={C.red} filter="url(#drop)" />
      </Pointer>
    </Desktop>
  );
}
